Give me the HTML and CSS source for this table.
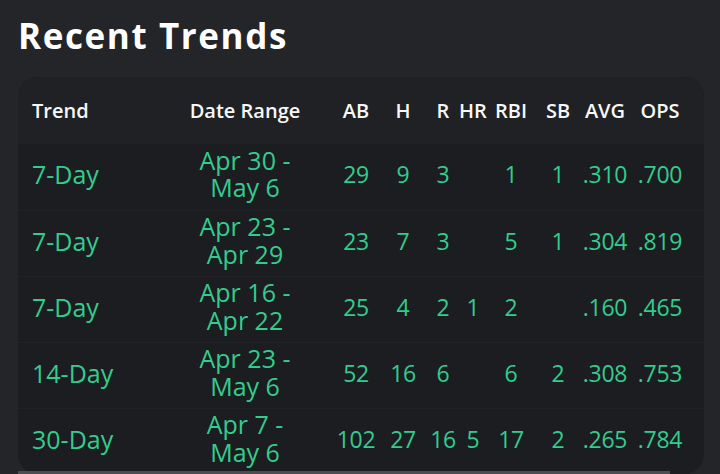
FILE: index.html
```html
<!DOCTYPE html>
<html lang="en">
<head>
<meta charset="utf-8">
<title>Recent Trends</title>
<link rel="stylesheet" href="styles.css">
</head>
<body>
<main class="page">
  <h1 class="title">Recent Trends</h1>
  <section class="table-wrap">
    <div class="card">
      <table class="trends">
        <colgroup>
          <col class="c-trend"><col class="c-range"><col class="c-ab"><col class="c-h"><col class="c-r"><col class="c-hr"><col class="c-rbi"><col class="c-sb"><col class="c-avg"><col class="c-ops"><col class="c-obp">
        </colgroup>
        <thead>
          <tr>
            <th class="left">Trend</th><th>Date Range</th><th>AB</th><th>H</th><th>R</th><th>HR</th><th>RBI</th><th>SB</th><th>AVG</th><th>OPS</th><th>OBP</th>
          </tr>
        </thead>
        <tbody>
          <tr>
            <td class="left">7-Day</td><td class="range">Apr 30 -<br>May 6</td><td>29</td><td>9</td><td>3</td><td></td><td>1</td><td>1</td><td>.310</td><td>.700</td><td></td>
          </tr>
          <tr>
            <td class="left">7-Day</td><td class="range">Apr 23 -<br>Apr 29</td><td>23</td><td>7</td><td>3</td><td></td><td>5</td><td>1</td><td>.304</td><td>.819</td><td></td>
          </tr>
          <tr>
            <td class="left">7-Day</td><td class="range">Apr 16 -<br>Apr 22</td><td>25</td><td>4</td><td>2</td><td>1</td><td>2</td><td></td><td>.160</td><td>.465</td><td></td>
          </tr>
          <tr>
            <td class="left">14-Day</td><td class="range">Apr 23 -<br>May 6</td><td>52</td><td>16</td><td>6</td><td></td><td>6</td><td>2</td><td>.308</td><td>.753</td><td></td>
          </tr>
          <tr>
            <td class="left">30-Day</td><td class="range">Apr 7 -<br>May 6</td><td>102</td><td>27</td><td>16</td><td>5</td><td>17</td><td>2</td><td>.265</td><td>.784</td><td>.3</td>
          </tr>
        </tbody>
      </table>
    </div>
    <div class="scrollbar"></div>
  </section>
</main>
</body>
</html>
```
FILE: styles.css
```css
html, body {
  margin: 0;
  padding: 0;
  background: #232529;
}

body {
  font-family: "Open Sans", "Liberation Sans", sans-serif;
  color: #ffffff;
  overflow: hidden;
}

.page {
  padding: 15px 18px 0 18px;
}

.title {
  margin: 0 0 20px 0;
  font-size: 35px;
  line-height: 42px;
  font-weight: 700;
  letter-spacing: 1.6px;
  color: #ffffff;
}

.table-wrap {
  position: relative;
  width: 686px;
}

.card {
  width: 686px;
  border-radius: 20px;
  overflow: hidden;
  background: #1b1d20;
}

.trends {
  border-collapse: collapse;
  table-layout: fixed;
  width: 741px;
}

.c-trend { width: 139px; }
.c-range { width: 176px; }
.c-ab { width: 46px; }
.c-h { width: 48px; }
.c-r { width: 32px; }
.c-hr { width: 28px; }
.c-rbi { width: 48px; }
.c-sb { width: 46px; }
.c-avg { width: 48px; }
.c-ops { width: 62px; }
.c-obp { width: 68px; }

.trends th,
.trends td {
  padding: 0;
  text-align: center;
  vertical-align: middle;
  white-space: nowrap;
}

.trends thead tr {
  height: 67px;
  background: #1f2124;
}

.trends th {
  font-size: 20px;
  font-weight: 600;
  color: #f7f7f7;
}

.trends tbody tr {
  height: 66px;
  border-top: 1px solid #202226;
}

.trends tbody tr:first-child {
  border-top: none;
}

.trends td {
  font-size: 23px;
  font-weight: 400;
  color: #33cc8e;
  padding-bottom: 5px;
  letter-spacing: -0.3px;
}

.trends td.left,
.trends td.range {
  font-size: 25px;
  letter-spacing: 0;
}

.trends td.range {
  line-height: 27.5px;
  white-space: normal;
}

.trends .left {
  text-align: left;
  padding-left: 14px;
}

.scrollbar {
  position: absolute;
  left: 0;
  top: 394px;
  width: 652px;
  height: 6px;
  background: #4b4d51;
}
```
